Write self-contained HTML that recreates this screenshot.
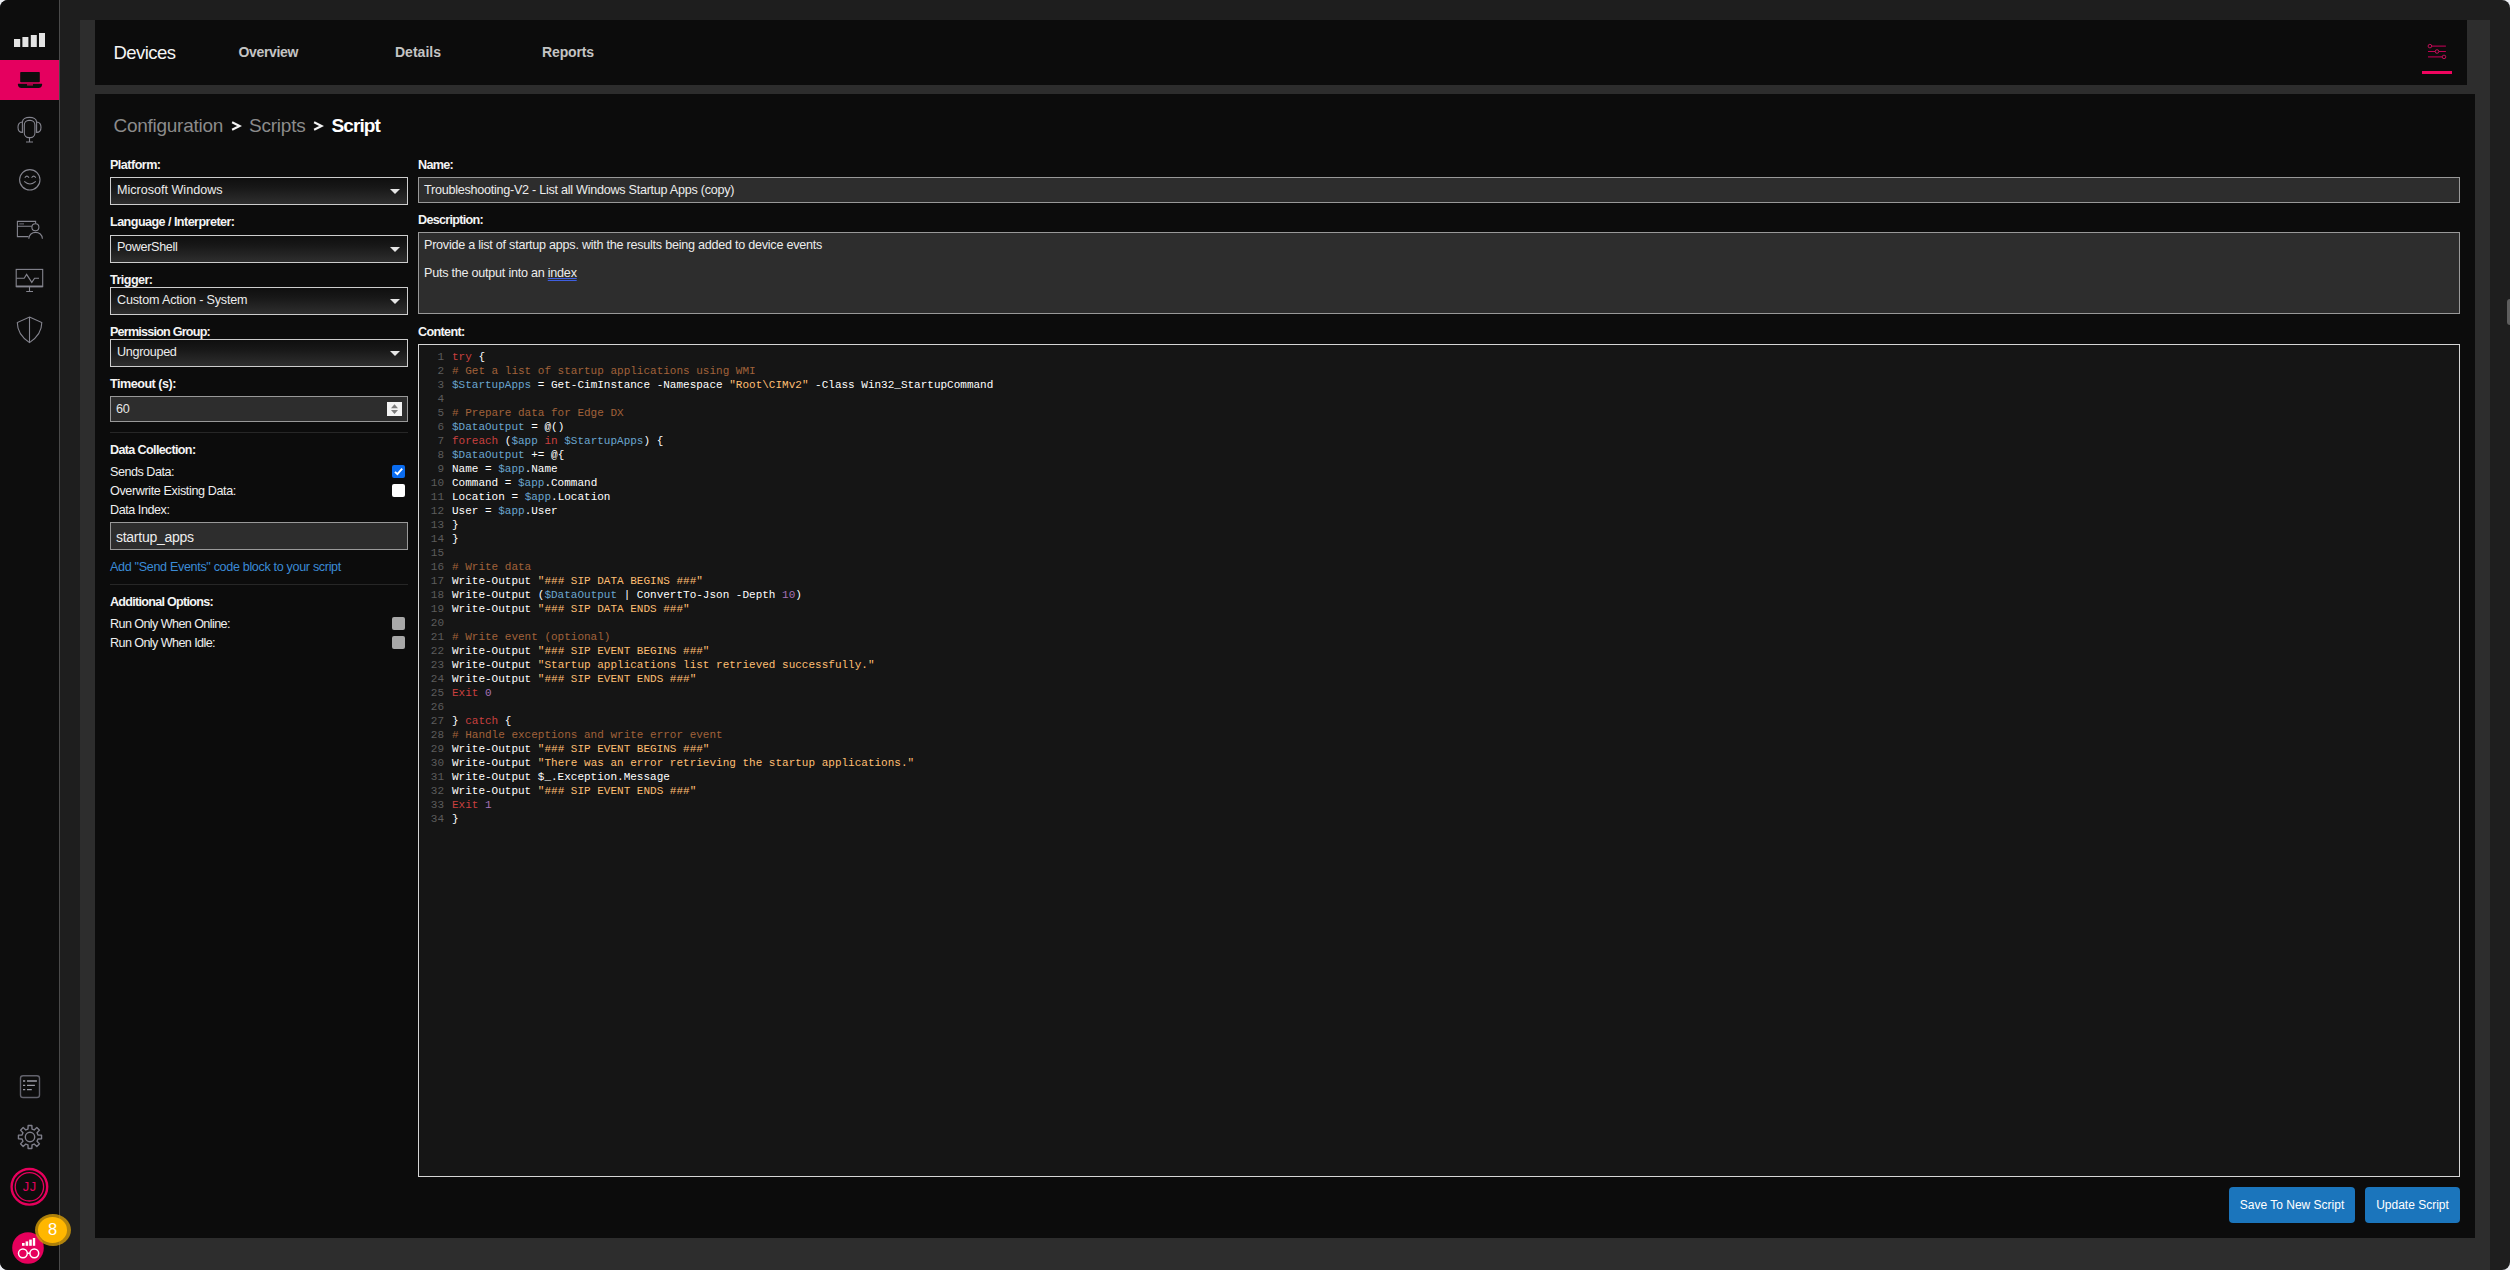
<!DOCTYPE html>
<html>
<head>
<meta charset="utf-8">
<title>Script</title>
<style>
*{box-sizing:border-box;margin:0;padding:0}
html,body{width:2510px;height:1270px;overflow:hidden;background:#eceef3}
body{font-family:"Liberation Sans",sans-serif;color:#f2f2f2;font-size:12px;position:relative}
.abs{position:absolute}
#app{position:absolute;left:0;top:0;width:2510px;height:1270px;background:#1e1e1e;border-radius:8px;overflow:hidden}
#side{position:absolute;left:0;top:0;width:60px;height:1270px;background:#0d0d0d;border-right:1px solid #4a4a4a}
#panel{position:absolute;left:80px;top:20px;width:2410px;height:1250px;background:#2d2d2d}
#hdr{position:absolute;left:95px;top:20px;width:2372px;height:65px;background:#0c0c0c}
#card{position:absolute;left:95px;top:94px;width:2380px;height:1144px;background:#0c0c0c}
.active{position:absolute;left:0;top:60px;width:59px;height:40px;background:#e5005f}
.t{position:absolute;white-space:nowrap;line-height:1}
.sel{position:absolute;left:110px;width:298px;height:28px;border:1px solid #cdcdcd;background:linear-gradient(#0f0f0f 0%,#171717 35%,#2e2e2e 100%)}
.sel .a{position:absolute;right:7px;top:11px;width:0;height:0;border-left:5px solid transparent;border-right:5px solid transparent;border-top:5px solid #e6e6e6}
.inp{position:absolute;border:1px solid #999;background:#2d2d2d}
.hr{position:absolute;left:110px;width:298px;height:1px;background:#272727}
.cb{position:absolute;left:392px;width:13px;height:13px;border-radius:2px}
#ed{position:absolute;left:418px;top:344px;width:2042px;height:833px;border:1px solid #d6d6d6;background:#151515}
#code{position:absolute;left:0;top:5px;font-family:"Liberation Mono",monospace;font-size:11px;line-height:14px;white-space:pre;color:#fff}
#code b{font-weight:normal}
#code i{font-style:normal;display:inline-block;width:25px;text-align:right;margin-right:8px;color:#5c5c5c}
.k{color:#c9403f}.c{color:#a1623a}.v{color:#6aa5cf}.s{color:#ffbf73}.n{color:#a673b5}
.btn{position:absolute;top:1187px;height:36px;background:#1b75bc;border-radius:4px;color:#fff;font-size:12px;text-align:center;line-height:36px}
</style>
</head>
<body>
<div id="app">
<div id="panel"></div>
<div id="hdr"></div>
<div id="card"></div>
<!-- breadcrumb chevrons -->
<svg class="abs" style="left:230px;top:119px" width="14" height="14" viewBox="0 0 14 14"><path d="M2.1 3.3 L9.6 7 L2.1 10.7" fill="none" stroke="#f4f4f4" stroke-width="2.1"/></svg>
<svg class="abs" style="left:312.3px;top:119px" width="14" height="14" viewBox="0 0 14 14"><path d="M2.1 3.3 L9.6 7 L2.1 10.7" fill="none" stroke="#f4f4f4" stroke-width="2.1"/></svg>
<!-- selects -->
<div class="sel" style="top:177px"><span class="a"></span></div>
<div class="sel" style="top:235px"><span class="a"></span></div>
<div class="sel" style="top:287px"><span class="a"></span></div>
<div class="sel" style="top:339px"><span class="a"></span></div>
<!-- timeout -->
<div class="inp" style="left:110px;top:396px;width:298px;height:26px">
<div class="abs" style="left:276px;top:5px;width:15px;height:14px;background:#f4f4f4"><svg width="15" height="14" viewBox="0 0 15 14"><path d="M4 6.2 L7.5 2.3 L11 6.2 Z M4 8 L7.5 11.9 L11 8 Z" fill="#7d7d7d"/></svg></div></div>
<div class="hr" style="top:432px"></div>
<div class="cb" style="top:465px;background:#0a6cf0"><svg width="13" height="13" viewBox="0 0 13 13"><path d="M3 6.8 L5.4 9.2 L10.2 3.6" fill="none" stroke="#fff" stroke-width="1.9"/></svg></div>
<div class="cb" style="top:484px;background:#fff"></div>
<div class="inp" style="left:110px;top:522px;width:298px;height:28px"></div>
<div class="hr" style="top:584px"></div>
<div class="cb" style="top:617px;background:#a8a8a8"></div>
<div class="cb" style="top:636px;background:#a8a8a8"></div>
<!-- name / description -->
<div class="inp" style="left:418px;top:177px;width:2042px;height:26px"></div>
<div class="inp" style="left:418px;top:232px;width:2042px;height:82px"></div>
<div class="t" style="left:424px;top:267px;font-size:12.6px;color:#ececec;letter-spacing:-0.24px">Puts the output into an <span style="text-decoration:underline double #3f5fe0;text-decoration-thickness:1px;text-underline-offset:1px">index</span></div>
<div class="t" style="left:113.5px;top:44px;font-size:18.5px;color:#f5f5f5;letter-spacing:-0.54px">Devices</div>
<div class="t" style="left:238.5px;top:45px;font-size:14px;color:#c4c4c4;letter-spacing:-0.35px;font-weight:bold">Overview</div>
<div class="t" style="left:395px;top:45px;font-size:14px;color:#c4c4c4;letter-spacing:0.01px;font-weight:bold">Details</div>
<div class="t" style="left:542px;top:45px;font-size:14px;color:#c4c4c4;letter-spacing:-0.13px;font-weight:bold">Reports</div>
<div class="t" style="left:113.5px;top:116px;font-size:19px;color:#8b8b8b;letter-spacing:-0.27px">Configuration</div>
<div class="t" style="left:249px;top:116px;font-size:19px;color:#8b8b8b;letter-spacing:-0.23px">Scripts</div>
<div class="t" style="left:331.5px;top:116px;font-size:19px;color:#ffffff;letter-spacing:-0.89px;font-weight:bold">Script</div>
<div class="t" style="left:110px;top:159px;font-size:12.6px;color:#f4f4f4;letter-spacing:-0.53px;font-weight:bold">Platform:</div>
<div class="t" style="left:418px;top:159px;font-size:12.6px;color:#f4f4f4;letter-spacing:-0.70px;font-weight:bold">Name:</div>
<div class="t" style="left:110px;top:216px;font-size:12.6px;color:#f4f4f4;letter-spacing:-0.55px;font-weight:bold">Language / Interpreter:</div>
<div class="t" style="left:418px;top:214px;font-size:12.6px;color:#f4f4f4;letter-spacing:-0.71px;font-weight:bold">Description:</div>
<div class="t" style="left:110px;top:274px;font-size:12.6px;color:#f4f4f4;letter-spacing:-0.55px;font-weight:bold">Trigger:</div>
<div class="t" style="left:110px;top:326px;font-size:12.6px;color:#f4f4f4;letter-spacing:-0.79px;font-weight:bold">Permission Group:</div>
<div class="t" style="left:418px;top:326px;font-size:12.6px;color:#f4f4f4;letter-spacing:-0.66px;font-weight:bold">Content:</div>
<div class="t" style="left:110px;top:378px;font-size:12.6px;color:#f4f4f4;letter-spacing:-0.49px;font-weight:bold">Timeout (s):</div>
<div class="t" style="left:110px;top:444px;font-size:12.6px;color:#f4f4f4;letter-spacing:-0.65px;font-weight:bold">Data Collection:</div>
<div class="t" style="left:110px;top:466px;font-size:12.6px;color:#efefef;letter-spacing:-0.48px">Sends Data:</div>
<div class="t" style="left:110px;top:485px;font-size:12.6px;color:#efefef;letter-spacing:-0.38px">Overwrite Existing Data:</div>
<div class="t" style="left:110px;top:504px;font-size:12.6px;color:#efefef;letter-spacing:-0.45px">Data Index:</div>
<div class="t" style="left:110px;top:561px;font-size:12.6px;color:#3b8bd6;letter-spacing:-0.34px">Add "Send Events" code block to your script</div>
<div class="t" style="left:110px;top:596px;font-size:12.6px;color:#f4f4f4;letter-spacing:-0.73px;font-weight:bold">Additional Options:</div>
<div class="t" style="left:110px;top:618px;font-size:12.6px;color:#efefef;letter-spacing:-0.59px">Run Only When Online:</div>
<div class="t" style="left:110px;top:637px;font-size:12.6px;color:#efefef;letter-spacing:-0.59px">Run Only When Idle:</div>
<div class="t" style="left:117px;top:184px;font-size:12.6px;color:#ececec;letter-spacing:-0.01px">Microsoft Windows</div>
<div class="t" style="left:117px;top:241px;font-size:12.6px;color:#ececec;letter-spacing:-0.32px">PowerShell</div>
<div class="t" style="left:117px;top:294px;font-size:12.6px;color:#ececec;letter-spacing:-0.18px">Custom Action - System</div>
<div class="t" style="left:117px;top:346px;font-size:12.6px;color:#ececec;letter-spacing:-0.31px">Ungrouped</div>
<div class="t" style="left:116px;top:403px;font-size:12.6px;color:#e6e6e6;letter-spacing:-0.26px">60</div>
<div class="t" style="left:116px;top:530px;font-size:14px;color:#ececec;letter-spacing:-0.27px">startup_apps</div>
<div class="t" style="left:424px;top:184px;font-size:12.6px;color:#ececec;letter-spacing:-0.26px">Troubleshooting-V2 - List all Windows Startup Apps (copy)</div>
<div class="t" style="left:424px;top:239px;font-size:12.6px;color:#ececec;letter-spacing:-0.25px">Provide a list of startup apps. with the results being added to device events</div>
<div id="ed"><div id="code"><i>1</i><b class="k">try</b> {
<i>2</i><b class="c"># Get a list of startup applications using WMI</b>
<i>3</i><b class="v">$StartupApps</b> = Get-CimInstance -Namespace <b class="s">"Root\CIMv2"</b> -Class Win32_StartupCommand
<i>4</i>
<i>5</i><b class="c"># Prepare data for Edge DX</b>
<i>6</i><b class="v">$DataOutput</b> = @()
<i>7</i><b class="k">foreach</b> (<b class="v">$app</b> <b class="k">in</b> <b class="v">$StartupApps</b>) {
<i>8</i><b class="v">$DataOutput</b> += @{
<i>9</i>Name = <b class="v">$app</b>.Name
<i>10</i>Command = <b class="v">$app</b>.Command
<i>11</i>Location = <b class="v">$app</b>.Location
<i>12</i>User = <b class="v">$app</b>.User
<i>13</i>}
<i>14</i>}
<i>15</i>
<i>16</i><b class="c"># Write data</b>
<i>17</i>Write-Output <b class="s">"### SIP DATA BEGINS ###"</b>
<i>18</i>Write-Output (<b class="v">$DataOutput</b> | ConvertTo-Json -Depth <b class="n">10</b>)
<i>19</i>Write-Output <b class="s">"### SIP DATA ENDS ###"</b>
<i>20</i>
<i>21</i><b class="c"># Write event (optional)</b>
<i>22</i>Write-Output <b class="s">"### SIP EVENT BEGINS ###"</b>
<i>23</i>Write-Output <b class="s">"Startup applications list retrieved successfully."</b>
<i>24</i>Write-Output <b class="s">"### SIP EVENT ENDS ###"</b>
<i>25</i><b class="k">Exit</b> <b class="n">0</b>
<i>26</i>
<i>27</i>} <b class="k">catch</b> {
<i>28</i><b class="c"># Handle exceptions and write error event</b>
<i>29</i>Write-Output <b class="s">"### SIP EVENT BEGINS ###"</b>
<i>30</i>Write-Output <b class="s">"There was an error retrieving the startup applications."</b>
<i>31</i>Write-Output $_.Exception.Message
<i>32</i>Write-Output <b class="s">"### SIP EVENT ENDS ###"</b>
<i>33</i><b class="k">Exit</b> <b class="n">1</b>
<i>34</i>}</div></div>
<div class="btn" style="left:2229px;width:126px">Save To New Script</div>
<div class="btn" style="left:2365px;width:95px">Update Script</div>
<div id="side">
<div class="active"></div>
<svg class="abs" style="left:0;top:0" width="59" height="1270" viewBox="0 0 59 1270" fill="none">
<!-- logo bars -->
<g fill="#e4e4e4"><rect x="14" y="39" width="6.2" height="8"/><rect x="22.4" y="37" width="6" height="10"/><rect x="30.8" y="35" width="6" height="12"/><rect x="39" y="33" width="6" height="14"/></g>
<!-- laptop -->
<g fill="#0d0d0d"><rect x="20.2" y="72" width="19.6" height="10.2" rx="0.8"/><path d="M17.9 83.7 H42.1 V84.3 Q42.1 88 38.4 88 H21.6 Q17.9 88 17.9 84.3 Z"/></g>
<rect x="27" y="84.2" width="6" height="1.3" fill="#c8004f"/>
<!-- headset mic -->
<g stroke="#85858f" stroke-width="1.1">
<path d="M22.4 122.2 C22.4 115.7 36.6 115.7 36.6 122.2"/>
<path d="M22.4 122 V132.4 C19.2 132.4 18 130 18 127.2 C18 124.4 19.2 122 22.4 122 Z"/>
<path d="M36.6 122 V132.4 C39.8 132.4 41 130 41 127.2 C41 124.4 39.8 122 36.6 122 Z"/>
<rect x="24.3" y="120.4" width="10.6" height="17.2" rx="4.6"/>
<path d="M29.5 137.6 V142 M26 142 H33"/>
</g>
<!-- smile -->
<g stroke="#85858f" stroke-width="1.1">
<circle cx="29.8" cy="179.8" r="10.2"/>
<path d="M24.2 181.4 Q29.9 186.6 35.8 181.4"/>
<path d="M24.8 177.7 Q26.9 174.6 29 177.7 M31.6 177.7 Q33.7 174.6 35.8 177.7"/>
</g>
<!-- window user -->
<g stroke="#85858f" stroke-width="1.1">
<path d="M35.6 223.6 V221.4 H17.4 V236.6 H28.4 M17.4 226.3 H31.8"/>
<path d="M19.3 223.8 H24" stroke="#5a5a62" stroke-width="1.2"/>
<circle cx="35.4" cy="227.3" r="3.5"/>
<path d="M28.8 238.8 C28.8 230.2 42.4 230.2 42.4 238.8"/>
</g>
<!-- monitor pulse -->
<g stroke="#85858f" stroke-width="1.1">
<rect x="16.2" y="269.4" width="26.5" height="17.2"/>
<path d="M16.2 286.4 H42.7" stroke-width="1.8"/>
<path d="M16.4 278.3 H24.2 L26.6 274.4 L31.8 282.4 L34.6 278.3 H39"/>
<path d="M29.5 287 V291.5 M26.2 291.5 H33"/>
</g>
<!-- shield -->
<g stroke="#85858f" stroke-width="1.1">
<path d="M29.5 317 L41.8 322.6 C41.8 331 37.5 337.5 29.5 342.6 C21.5 337.5 17.3 331 17.3 322.6 Z"/>
<path d="M29.5 317 V342.6"/>
</g>
<!-- list -->
<rect x="20.5" y="1075.7" width="19" height="21.8" rx="2.6" stroke="#62626c" stroke-width="1.4"/>
<g stroke="#9c9ca6" stroke-width="1.3"><path d="M23 1081 H25.2 M27 1081 H36.9 M23 1085.3 H25.2 M27 1085.3 H34.9 M23 1089.7 H25.2 M27 1089.7 H31.8"/></g>
<!-- gear -->
<g stroke="#7e7e8a" stroke-width="1.4" stroke-linejoin="round">
<circle cx="30" cy="1137" r="4.7"/>
<path d="M27.97 1129.05 L28.14 1125.45 L31.86 1125.45 L32.03 1129.05 L34.18 1129.95 L36.85 1127.51 L39.49 1130.15 L37.05 1132.82 L37.95 1134.97 L41.55 1135.14 L41.55 1138.86 L37.95 1139.03 L37.05 1141.18 L39.49 1143.85 L36.85 1146.49 L34.18 1144.05 L32.03 1144.95 L31.86 1148.55 L28.14 1148.55 L27.97 1144.95 L25.82 1144.05 L23.15 1146.49 L20.51 1143.85 L22.95 1141.18 L22.05 1139.03 L18.45 1138.86 L18.45 1135.14 L22.05 1134.97 L22.95 1132.82 L20.51 1130.15 L23.15 1127.51 L25.82 1129.95 Z"/>
</g>
<!-- avatar -->
<circle cx="29.4" cy="1186.8" r="17.8" stroke="#e6005c" stroke-width="2.4"/>
<circle cx="29.4" cy="1186.8" r="14.2" stroke="#e6005c" stroke-width="1.3"/>
<!-- bottom logo -->
<circle cx="28" cy="1248" r="15.8" fill="#e6005c"/>
<g fill="#fff"><rect x="22" y="1243" width="2.6" height="2.8"/><rect x="25.6" y="1241.4" width="2.6" height="4.4"/><rect x="29.2" y="1239.6" width="2.6" height="6.2"/><rect x="32.8" y="1238" width="2.4" height="7.8"/></g>
<g stroke="#fff" stroke-width="1.5"><circle cx="22.9" cy="1253.3" r="4.4"/><circle cx="34.3" cy="1253.3" r="4.4"/><path d="M27.3 1253.3 H29.9"/></g>
</svg>
<div class="t" style="left:22.7px;top:1181px;font-size:12.8px;color:#e3005b;letter-spacing:0.6px">JJ</div>
</div>
<!-- badge -->
<div class="abs" style="left:34.7px;top:1213.9px;width:35.9px;height:32px;border-radius:50%;background:rgba(214,158,10,0.8)"></div>
<div class="abs" style="left:37.8px;top:1216.8px;width:29.6px;height:26.2px;border-radius:50%;background:#ffb700"></div>
<div class="t" style="left:48.05px;top:1221px;font-size:16.5px;color:#fff">8</div>
<!-- settings sliders -->
<svg class="abs" style="left:2420px;top:40px" width="36" height="24" viewBox="0 0 36 24" fill="none">
<g stroke="#a8004a" stroke-width="1.3"><path d="M11.8 6.1 H25.9 M8 16.9 H22"/></g>
<path d="M8 11.5 H15.2 M18.9 11.5 H25.9" stroke="#d6005a" stroke-width="0.9"/>
<g stroke="#e8106a" stroke-width="0.8"><circle cx="9.9" cy="6.1" r="1.8"/><circle cx="17" cy="11.5" r="1.8"/><circle cx="24" cy="16.9" r="1.8"/></g>
</svg>
<div class="abs" style="left:2422px;top:71px;width:30px;height:3px;background:#f0055f"></div>
<!-- right edge tab -->
<div class="abs" style="left:2507px;top:299px;width:6px;height:26px;border-radius:3px;background:#5e5e5e"></div>
</div>
</body>
</html>
